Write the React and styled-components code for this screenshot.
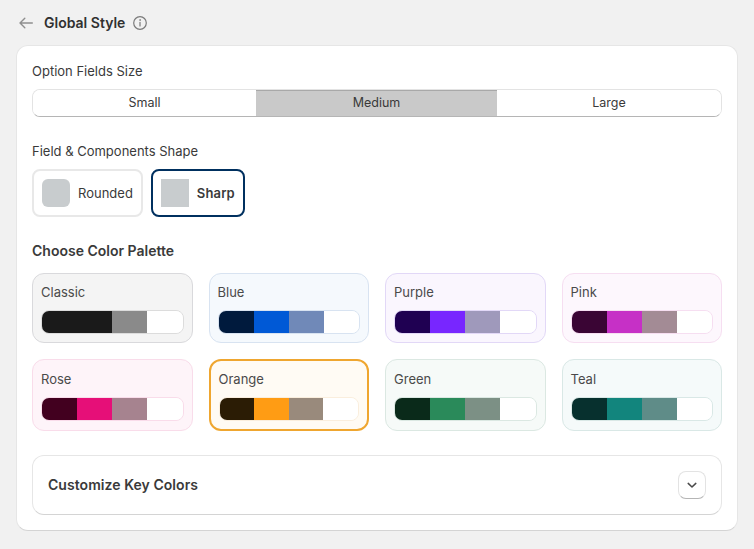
import React from 'react';
import styled, { createGlobalStyle } from 'styled-components';

const GlobalStyle = createGlobalStyle`
  body {
    margin: 0;
    background: #f1f1f1;
    font-family: Inter, "Liberation Sans", sans-serif;
    color: #303030;
  }
`;

// Page container
const Page = styled.div`
  width: 754px;
  height: 549px;
  padding: 14px 16px 0;
  box-sizing: border-box;
  overflow: hidden;
`;

// Back arrow, title and info icon
const Header = styled.div`
  display: flex;
  align-items: center;
  height: 18px;
  margin-bottom: 13px;
`;

const BackIcon = styled.svg`
  width: 20px;
  height: 20px;
  margin: 0 2px 0 0;
  flex: none;
`;

const Title = styled.h1`
  margin: 0 7px 0 6px;
  font-size: 14px;
  line-height: 18px;
  font-weight: 600;
`;

const InfoIcon = styled.svg`
  width: 16px;
  height: 16px;
  flex: none;
`;

// White main card
const Card = styled.div`
  height: 486px;
  padding: 15px 15px 0;
  box-sizing: border-box;
  background: #fff;
  border: 1px solid #e6e6e6;
  border-bottom-color: #d4d4d4;
  border-radius: 12px;
`;

const Label = styled.div`
  font-size: 13px;
  line-height: 20px;
  margin-bottom: 8px;
  color: #3a3a3a;
`;

// Size segmented control
const Segments = styled.div`
  display: grid;
  grid-template-columns: 223px 241px 1fr;
  height: 28px;
  margin-bottom: 24px;
  box-sizing: border-box;
  border-radius: 8px;
  border: 1px solid #e3e3e3;
  border-bottom-color: #b5b5b5;
  overflow: hidden;
`;

const Segment = styled.div`
  display: flex;
  align-items: center;
  justify-content: center;
  padding-bottom: 2px;
  font-size: 12.5px;
  color: #3a3a3a;
  background: ${(p) => (p.$active ? '#c9c9c9' : '#fff')};
  box-shadow: ${(p) => (p.$active ? 'inset 0 1px 0 #a8a8a8' : 'none')};
`;

// Shape picker
const Shapes = styled.div`
  display: flex;
  gap: 8px;
  margin-bottom: 24px;
`;

const ShapeTile = styled.div`
  display: flex;
  align-items: center;
  gap: 8px;
  height: 48px;
  padding: 0 8px;
  box-sizing: border-box;
  border: 2px solid ${(p) => (p.$active ? '#00305f' : '#e8e8e8')};
  border-radius: 8px;
  font-size: 13px;
  letter-spacing: ${(p) => (p.$active ? '0.15px' : '0')};
  color: #3a3a3a;
  font-weight: ${(p) => (p.$active ? 600 : 400)};
`;

const Swatch = styled.div`
  width: 28px;
  height: 28px;
  background: #c8ccce;
  border-radius: ${(p) => p.$radius}px;
`;

const SectionTitle = styled.div`
  font-size: 14px;
  line-height: 20px;
  font-weight: 600;
  margin-bottom: 12px;
  color: #3a3a3a;
`;

// Palette grid
const Palettes = styled.div`
  display: grid;
  grid-template-columns: repeat(4, 1fr);
  gap: 16px;
  margin-bottom: 24px;
`;

const PaletteCard = styled.div`
  display: flex;
  flex-direction: column;
  justify-content: center;
  gap: 8px;
  padding: 8px;
  border-radius: 12px;
  border: ${(p) => (p.$active ? '2px' : '1px')} solid ${(p) => p.$border};
  background: ${(p) => p.$bg};
`;

const PaletteName = styled.div`
  font-size: 13px;
  line-height: 20px;
  color: #4a4a4a;
`;

const Strip = styled.div`
  display: flex;
  height: 24px;
  box-sizing: border-box;
  border-radius: 8px;
  border: 1px solid ${(p) => p.$border};
  overflow: hidden;
`;

const Chip = styled.div`
  flex: 1;
  margin: -1px 0;
  background: ${(p) => p.$color};
`;

// Collapsed accordion
const Accordion = styled.div`
  display: flex;
  align-items: center;
  justify-content: space-between;
  height: 60px;
  padding: 0 15px;
  box-sizing: border-box;
  border: 1px solid #e6e6e6;
  border-bottom-color: #d4d4d4;
  border-radius: 12px;
`;

const AccordionTitle = styled.div`
  font-size: 14px;
  font-weight: 600;
  letter-spacing: 0.05px;
  color: #3a3a3a;
  padding-bottom: 1px;
`;

const ChevronButton = styled.div`
  display: flex;
  align-items: center;
  justify-content: center;
  width: 28px;
  height: 28px;
  box-sizing: border-box;
  border: 1px solid #e3e3e3;
  border-bottom-color: #b5b5b5;
  border-radius: 8px;
`;

const palettes = [
  { name: 'Classic', bg: '#f4f4f4', border: '#d9d9dc', strip: '#dcdcdc', colors: ['#1a1a1a', '#1a1a1a', '#8a8a8a'] },
  { name: 'Blue', bg: '#f5f9fd', border: '#d8e3f1', strip: '#d8e3f1', colors: ['#001a3d', '#0059d6', '#7089b8'] },
  { name: 'Purple', bg: '#faf6fe', border: '#e2d8f7', strip: '#e2d8f7', colors: ['#1f0052', '#7826ff', '#9f99bb'] },
  { name: 'Pink', bg: '#fdf7fd', border: '#f6def1', strip: '#f6def1', colors: ['#3a0534', '#c630c6', '#a38b95'] },
  { name: 'Rose', bg: '#fef4f9', border: '#f9dcea', strip: '#f9dcea', colors: ['#42001f', '#e60f78', '#a6838f'] },
  { name: 'Orange', bg: '#fffbf4', border: '#efa62f', strip: '#faeedd', colors: ['#2b1c05', '#ff9c14', '#998a7c'], active: true },
  { name: 'Green', bg: '#f6faf8', border: '#dbe8e2', strip: '#dbe8e2', colors: ['#0a2a1a', '#2a8a5a', '#7c9085'] },
  { name: 'Teal', bg: '#f5fafa', border: '#d9e8e6', strip: '#d9e8e6', colors: ['#07302e', '#12857d', '#5f8c88'] },
];

const App = () => {
  return (
    <Page>
      <GlobalStyle />
      <Header>
        <BackIcon viewBox="0 0 20 20" fill="none" stroke="#8f8f8f" strokeWidth="1.4" strokeLinecap="round" strokeLinejoin="round">
          <path d="M16.3 10H4M8.8 5.3 4 10l4.8 4.7" />
        </BackIcon>
        <Title>Global Style</Title>
        <InfoIcon viewBox="0 0 16 16" fill="none" stroke="#7a7a7a" strokeWidth="1.2" strokeLinecap="round">
          <circle cx="8" cy="8" r="6.3" />
          <path d="M8 7.4v3.6" />
          <circle cx="8" cy="5" r="0.5" fill="#7a7a7a" strokeWidth="0.6" />
        </InfoIcon>
      </Header>
      <Card>
        <Label>Option Fields Size</Label>
        <Segments>
          <Segment>Small</Segment>
          <Segment $active>Medium</Segment>
          <Segment>Large</Segment>
        </Segments>
        <Label>Field &amp; Components Shape</Label>
        <Shapes>
          <ShapeTile>
            <Swatch $radius={6} />
            Rounded
          </ShapeTile>
          <ShapeTile $active>
            <Swatch $radius={0} />
            Sharp
          </ShapeTile>
        </Shapes>
        <SectionTitle>Choose Color Palette</SectionTitle>
        <Palettes>
          {palettes.map((palette) => (
            <PaletteCard key={palette.name} $bg={palette.bg} $border={palette.border} $active={palette.active}>
              <PaletteName>{palette.name}</PaletteName>
              <Strip $border={palette.strip}>
                {palette.colors.map((color, index) => (
                  <Chip key={index} $color={color} />
                ))}
                <Chip $color="#fff" />
              </Strip>
            </PaletteCard>
          ))}
        </Palettes>
        <Accordion>
          <AccordionTitle>Customize Key Colors</AccordionTitle>
          <ChevronButton>
            <svg width="14" height="14" viewBox="0 0 14 14" fill="none" stroke="#4a4a4a" strokeWidth="1.5" strokeLinecap="round" strokeLinejoin="round">
              <path d="M3.2 5.4 7 9l3.8-3.6" />
            </svg>
          </ChevronButton>
        </Accordion>
      </Card>
    </Page>
  );
};

export default App;
